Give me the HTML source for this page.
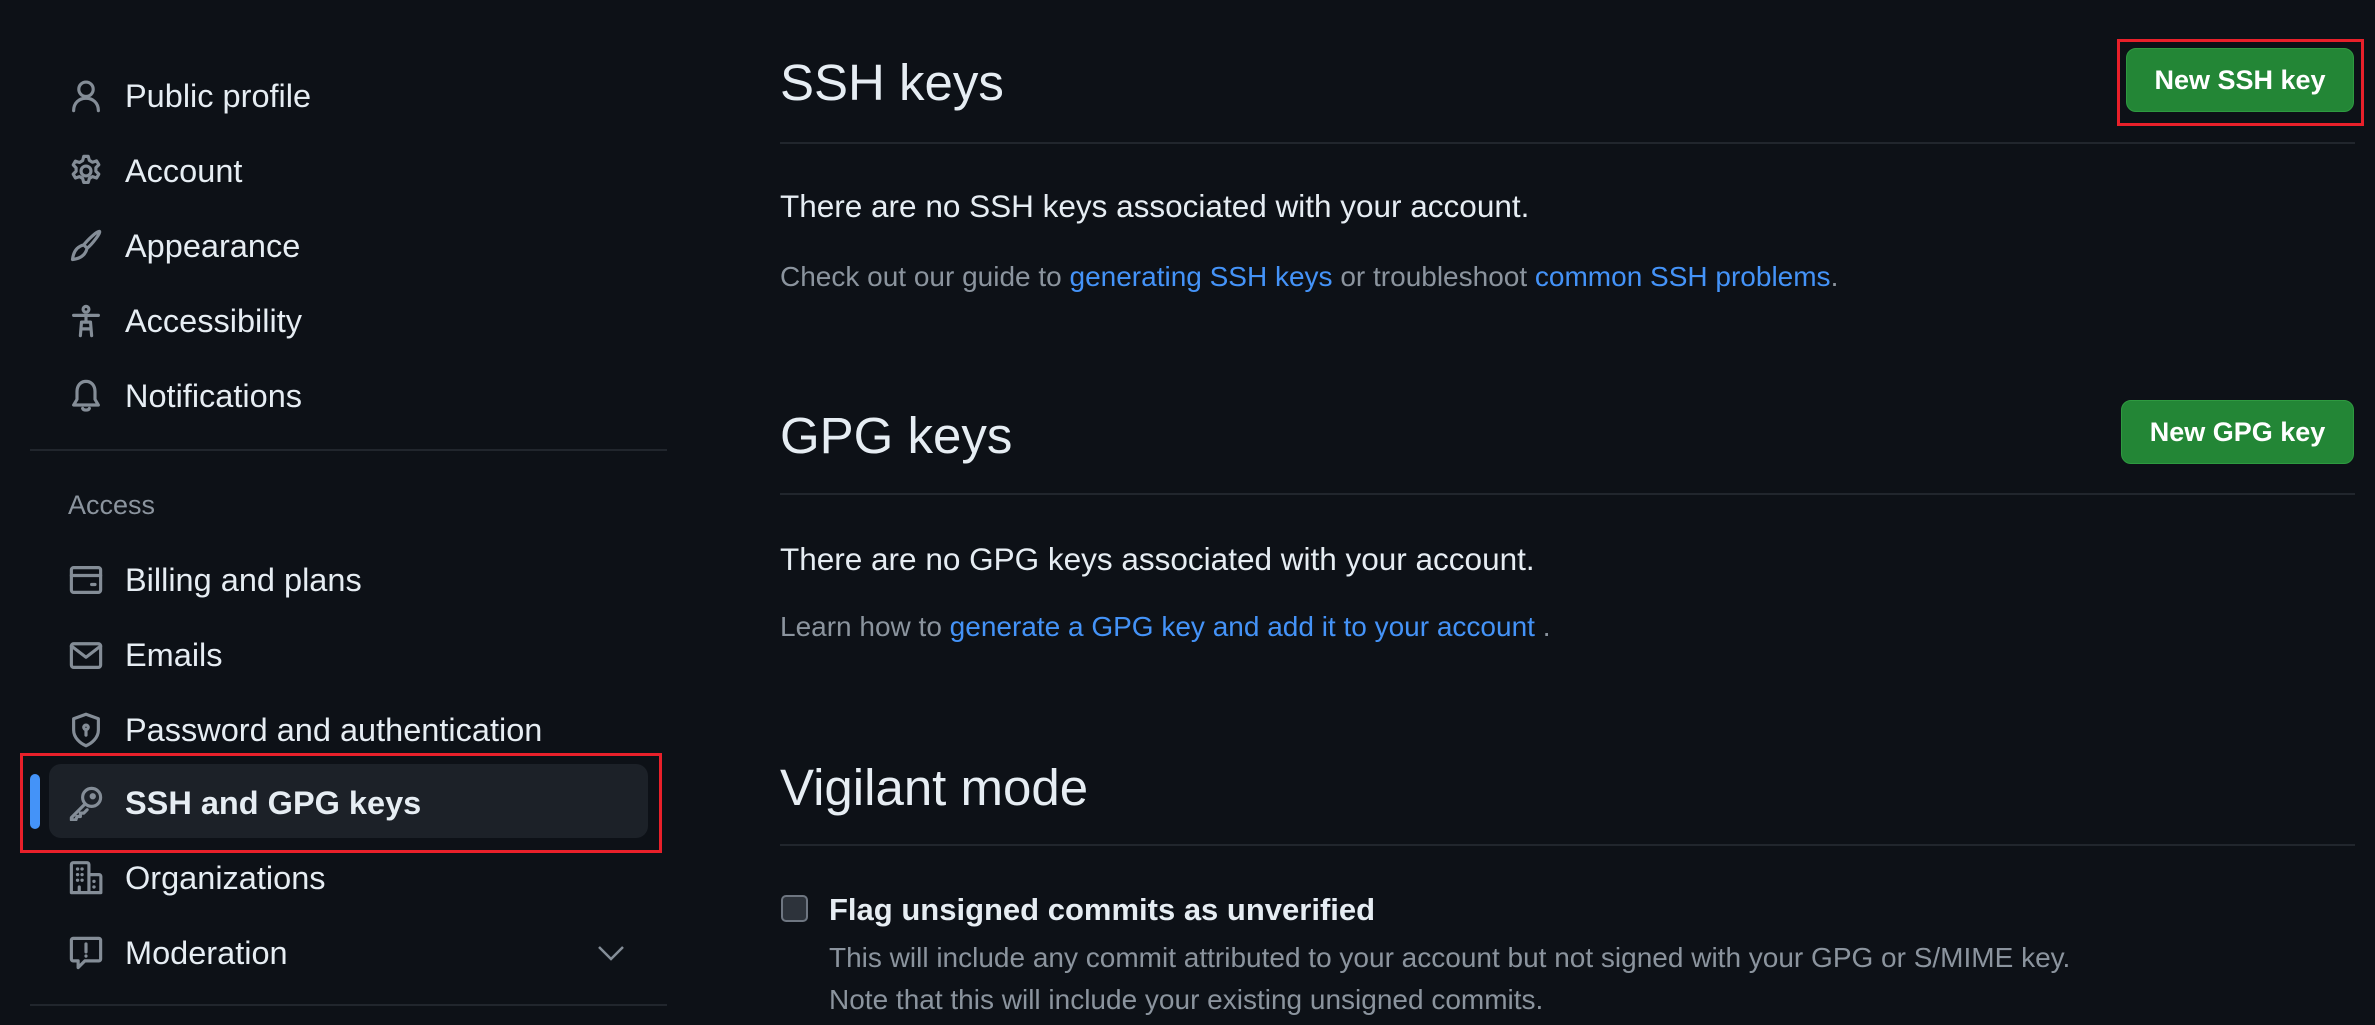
<!DOCTYPE html>
<html><head><meta charset="utf-8"><style>
*{margin:0;padding:0;box-sizing:border-box}
body{width:2375px;height:1025px;background:#0d1117;font-family:"Liberation Sans",sans-serif;color:#e6edf3;position:relative;overflow:hidden}
.a{position:absolute;white-space:nowrap}
.nav{left:125px;font-size:32.5px;line-height:40px;height:40px}
.ic{position:absolute;left:68px;width:36px;height:36px}
.ic svg{width:36px;height:36px;fill:none;stroke:#848d97;stroke-width:1.4;stroke-linecap:round;stroke-linejoin:round}
.hr{position:absolute;height:2px;background:#21262d}
h2{position:absolute;left:780px;font-weight:400;font-size:51px;line-height:60px;white-space:nowrap}
.p{left:780px;font-size:31.5px;line-height:40px}
.g{left:780px;font-size:28px;line-height:34px;color:#8b949e}
.g a{color:#4493f8;text-decoration:none}
.btn{position:absolute;background:#238636;border:1px solid #2e9a40;border-radius:10px;color:#fff;font-weight:700;font-size:27px;display:flex;align-items:center;justify-content:center}
.red{position:absolute;border:3px solid #e8202a}
</style></head><body>

<div class="ic" style="top:78px"><svg viewBox="0 0 16 16"><circle cx="8" cy="5" r="3.2"/><path d="M2.5 14.5c0-3.5 2.5-5.5 5.5-5.5s5.5 2 5.5 5.5"/></svg></div>
<div class="a nav" style="top:76px">Public profile</div>
<div class="ic" style="top:153px"><svg viewBox="0 0 16 16"><circle cx="8" cy="8" r="2.2"/><path d="M7 1.5h2l.5 1.8 1.4.8 1.8-.6 1 1.7-1.3 1.3v1.6l1.3 1.3-1 1.7-1.8-.6-1.4.8-.5 1.8H7l-.5-1.8-1.4-.8-1.8.6-1-1.7 1.3-1.3V6.6L2.3 5.3l1-1.7 1.8.6 1.4-.8z"/></svg></div>
<div class="a nav" style="top:151px">Account</div>
<div class="ic" style="top:228px"><svg viewBox="0 0 16 16"><path d="M14 1.5c.8.5-3.5 6-5.5 7.5L7 7.5C8.5 5.5 13.2 1 14 1.5zM7 7.5l1.5 1.5c-.5 2-2 4.5-6.5 5 .5-4.5 3-6 5-6.5z"/></svg></div>
<div class="a nav" style="top:226px">Appearance</div>
<div class="ic" style="top:303px"><svg viewBox="0 0 16 16"><circle cx="8" cy="2.8" r="1.3"/><path d="M2.5 5.5h11M8 5.5v3M6 8.5h4M6 8.5l-.5 6M10 8.5l.5 6M6 11.5h4"/></svg></div>
<div class="a nav" style="top:301px">Accessibility</div>
<div class="ic" style="top:378px"><svg viewBox="0 0 16 16"><path d="M8 1.5c-2.5 0-4 2-4 4.5v3.5l-1.5 2.5h11L12 9.5V6c0-2.5-1.5-4.5-4-4.5zM6.5 13.5c.3 1 2.7 1 3 0"/></svg></div>
<div class="a nav" style="top:376px">Notifications</div>

<div class="hr" style="left:30px;width:637px;top:449px"></div>
<div class="a" style="left:68px;top:488px;font-size:27px;line-height:34px;color:#8b949e">Access</div>

<div class="ic" style="top:562px"><svg viewBox="0 0 16 16"><rect x="1.5" y="2.5" width="13" height="11" rx="1"/><path d="M1.5 6h13M10.5 10h1.5"/></svg></div>
<div class="a nav" style="top:560px">Billing and plans</div>
<div class="ic" style="top:637px"><svg viewBox="0 0 16 16"><rect x="1.5" y="3" width="13" height="10.5" rx="1"/><path d="M1.5 4l6.5 5 6.5-5"/></svg></div>
<div class="a nav" style="top:635px">Emails</div>
<div class="ic" style="top:712px"><svg viewBox="0 0 16 16"><path d="M8 1l5.5 2v5c0 3.5-3 6-5.5 7-2.5-1-5.5-3.5-5.5-7V3z"/><circle cx="8" cy="6.8" r="1"/><path d="M8 7.8v2.5"/></svg></div>
<div class="a nav" style="top:710px">Password and authentication</div>

<div style="position:absolute;left:49px;top:764px;width:599px;height:74px;background:#1c2128;border-radius:12px"></div>
<div style="position:absolute;left:30px;top:774px;width:10px;height:55px;background:#4493f8;border-radius:5px"></div>
<div class="ic" style="top:785px"><svg viewBox="0 0 16 16"><circle cx="10.5" cy="5.5" r="4"/><circle cx="11" cy="5" r=".7"/><path d="M7.5 8.5L1.5 14.5v1h2l.5-1.5h1.5V12.5h1.5l1.5-1.5"/></svg></div>
<div class="a nav" style="top:783px;font-weight:700">SSH and GPG keys</div>
<div class="red" style="left:20px;top:753px;width:642px;height:100px"></div>

<div class="ic" style="top:860px"><svg viewBox="0 0 16 16"><path d="M1.5 14.5V2a.8.8 0 01.8-.8h6.2a.8.8 0 01.8.8v12.5M9.3 6.5h4.5a.8.8 0 01.8.8v7.2H1.5M5 14.5v-2.5M4.2 4h.1M6.2 4h.1M4.2 6.5h.1M6.2 6.5h.1M4.2 9h.1M6.2 9h.1M11.5 9.5h.1M11.5 12h.1"/></svg></div>
<div class="a nav" style="top:858px">Organizations</div>
<div class="ic" style="top:935px"><svg viewBox="0 0 16 16"><path d="M2.3 1.5h11.4a.8.8 0 01.8.8v8.4a.8.8 0 01-.8.8H7.5l-3 3v-3H2.3a.8.8 0 01-.8-.8V2.3a.8.8 0 01.8-.8zM8 4v3.5M8 9.3v.1"/></svg></div>
<div class="a nav" style="top:933px">Moderation</div>
<svg style="position:absolute;left:597px;top:943px" width="28" height="20" viewBox="0 0 28 20"><path d="M2 4l12 12L26 4" fill="none" stroke="#848d97" stroke-width="2.5"/></svg>
<div class="hr" style="left:30px;width:637px;top:1004px"></div>

<h2 style="top:53px">SSH keys</h2>
<div class="btn" style="left:2126px;top:48px;width:228px;height:64px">New SSH key</div>
<div class="red" style="left:2117px;top:39px;width:247px;height:87px"></div>
<div class="hr" style="left:780px;width:1575px;top:142px"></div>
<div class="a p" style="top:186px">There are no SSH keys associated with your account.</div>
<div class="a g" style="top:260px">Check out our guide to <a>generating SSH keys</a> or troubleshoot <a>common SSH problems</a>.</div>

<h2 style="top:406px">GPG keys</h2>
<div class="btn" style="left:2121px;top:400px;width:233px;height:64px">New GPG key</div>
<div class="hr" style="left:780px;width:1575px;top:493px"></div>
<div class="a p" style="top:539px">There are no GPG keys associated with your account.</div>
<div class="a g" style="top:610px">Learn how to <a>generate a GPG key and add it to your account</a> .</div>

<h2 style="top:758px">Vigilant mode</h2>
<div class="hr" style="left:780px;width:1575px;top:844px"></div>
<div style="position:absolute;left:781px;top:895px;width:27px;height:27px;border:2px solid #6e7681;border-radius:5px;background:#2d333b"></div>
<div class="a" style="left:829px;top:890px;font-size:31px;line-height:40px;font-weight:700">Flag unsigned commits as unverified</div>
<div class="a g" style="left:829px;top:941px">This will include any commit attributed to your account but not signed with your GPG or S/MIME key.</div>
<div class="a g" style="left:829px;top:983px">Note that this will include your existing unsigned commits.</div>
</body></html>
